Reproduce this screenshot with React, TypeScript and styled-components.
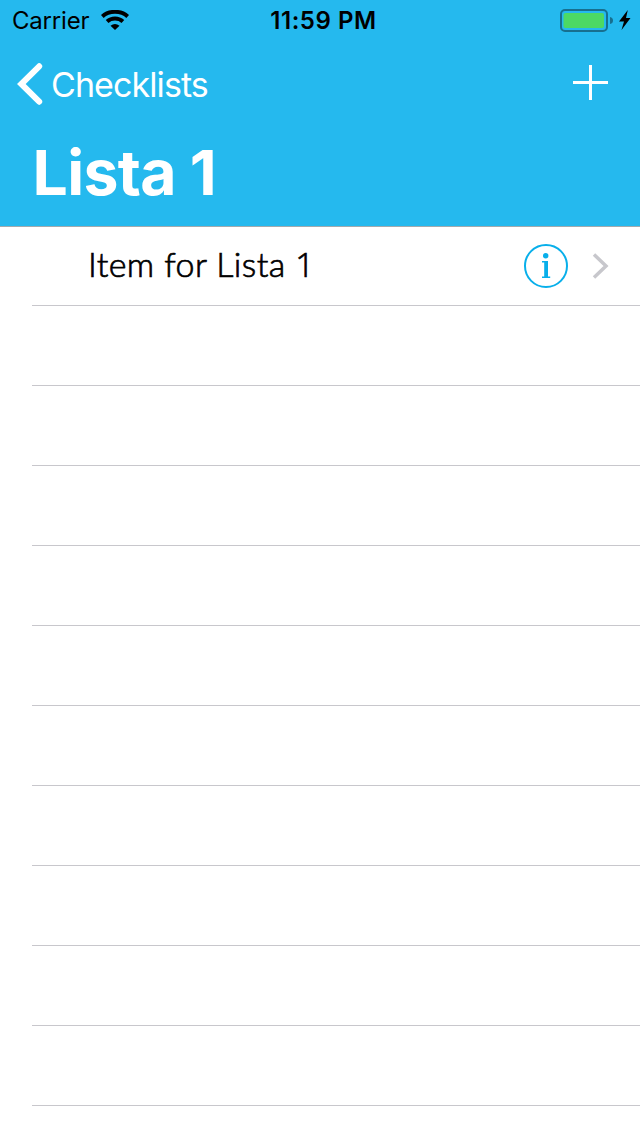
import React from 'react';
import styled, { createGlobalStyle } from 'styled-components';

const Global = createGlobalStyle`
  * { box-sizing: border-box; }
  body { margin: 0; background: #fff; font-family: Inter, "Liberation Sans", sans-serif; }
`;
const Screen = styled.div`
  width: 640px;
  height: 1136px;
  overflow: hidden;
  background: #fff;
  display: flex;
  flex-direction: column;
`;
const Header = styled.header`
  height: 227px;
  flex: none;
  background: #25b9ee;
  border-bottom: 1px solid #a2aaae;
`;
const StatusBar = styled.div`
  height: 40px;
  display: grid;
  grid-template-columns: 1fr auto 1fr;
  padding: 1px 9px 0 12px;
  color: #000;
`;
const StatusSide = styled.div<{ $end?: boolean }>`
  display: flex;
  align-items: center;
  gap: ${p => (p.$end ? '5px' : '12px')};
  justify-content: ${p => (p.$end ? 'flex-end' : 'flex-start')};

  svg { margin-bottom: 2px; }
`;
const Carrier = styled.span`
  width: 77px;
  font-size: 24px;
  line-height: 40px;
  letter-spacing: -0.2px;
`;
const Clock = styled.span`
  padding-left: 4px;
  font-size: 24px;
  line-height: 40px;
  font-weight: 600;
  letter-spacing: 0.55px;
`;
const NavBar = styled.nav`
  height: 88px;
  display: flex;
  align-items: center;
  justify-content: space-between;
  padding: 0 32px 0 17px;
`;
const Back = styled.div`
  display: flex;
  align-items: center;
  gap: 8px;
  color: #fff;
  font-size: 34px;
  letter-spacing: -0.92px;
`;
const BackLabel = styled.span`
  padding-top: 2px;
  line-height: 42px;
`;
const PlusIcon = styled.svg`
  margin-bottom: 3px;
`;
const Title = styled.h1`
  margin: 0;
  padding: 0 0 0 32.5px;
  color: #fff;
  font-size: 62.5px;
  line-height: 88px;
  font-weight: 700;
  letter-spacing: -0.7px;
`;
const List = styled.main`
  flex: 1;
`;
const Row = styled.div`
  height: 80px;
  margin-left: 32px;
  padding: 0 31px 0 56px;
  border-bottom: 1px solid #c8c7cc;
  display: flex;
  align-items: center;
  &:first-child { height: 79px; }
`;
const Label = styled.span`
  flex: 1;
  padding-bottom: 5px;
  font-family: Lato, sans-serif;
  font-weight: 300;
  font-size: 34px;
  line-height: 42px;
  letter-spacing: 0.4px;
  -webkit-text-stroke: 0.7px #000;
  color: #000;
`;
const Digit = styled.span`
  font-family: "Open Sans", sans-serif;
  font-size: 33.5px;
  line-height: 1;
`;
const InfoIcon = styled.svg`
  margin-right: 24px;
`;

export default function App() {
  return (
    <Screen>
      <Global />
      <Header>
        <StatusBar>
          <StatusSide>
            <Carrier>Carrier</Carrier>
            <svg width="28" height="20" viewBox="0 0 28 20">
              <path d="M1.300 6.400C8 .3 20 .3 26.700 6.400M6.100 11.600C10.500 7.600 17.500 7.600 21.900 11.600" fill="none" stroke="#000" strokeWidth="4" />
              <path d="M14 20 9.500 15.700Q14 12.300 18.500 15.700Z" />
            </svg>
          </StatusSide>
          <Clock>11:59 PM</Clock>
          <StatusSide $end>
            <svg width="54" height="23" viewBox="0 0 54 23">
              <rect x="1" y="1" width="46" height="21" rx="4" fill="none" stroke="#176f8f" strokeWidth="2" />
              <rect x="3.500" y="4" width="40.500" height="15" rx="2" fill="#4cd964" />
              <path d="M50 8q3 .5 3 3.500t-3 3.500Z" fill="#176f8f" />
            </svg>
            <svg width="12" height="20" viewBox="0 0 12 20">
              <path d="M8.800 0 0 11.500h5L2.500 20 11.500 8H7Z" />
            </svg>
          </StatusSide>
        </StatusBar>
        <NavBar>
          <Back>
            <svg width="26" height="42" viewBox="0 0 26 42">
              <path d="M22.200 3.300 4.300 21l17.900 17.700" fill="none" stroke="#fff" strokeWidth="6" strokeLinecap="round" />
            </svg>
            <BackLabel>Checklists</BackLabel>
          </Back>
          <PlusIcon width="35" height="35" viewBox="0 0 35 35">
            <path d="M0 17.500h35M17.500 0v35" stroke="#fff" strokeWidth="3" />
          </PlusIcon>
        </NavBar>
        <Title>Lista 1</Title>
      </Header>
      <List>
        <Row>
          <Label>Item for Lista <Digit>1</Digit></Label>
          <InfoIcon width="44" height="44" viewBox="0 0 44 44">
            <circle cx="22" cy="22" r="21" fill="none" stroke="#08afea" strokeWidth="2" />
            <circle cx="21.700" cy="11.700" r="2.700" fill="#08afea" />
            <path d="M18 17h6v15.500h2.200V34H18v-1.500h2.200v-14H18Z" fill="#08afea" />
          </InfoIcon>
          <svg width="17" height="26" viewBox="0 0 17 26">
            <path d="m2 1.500 12 11.500L2 24.500" fill="none" stroke="#c7c7cc" strokeWidth="3.500" />
          </svg>
        </Row>
        {Array.from({ length: 10 }, (_, i) => <Row key={i} />)}
      </List>
    </Screen>
  );
}
